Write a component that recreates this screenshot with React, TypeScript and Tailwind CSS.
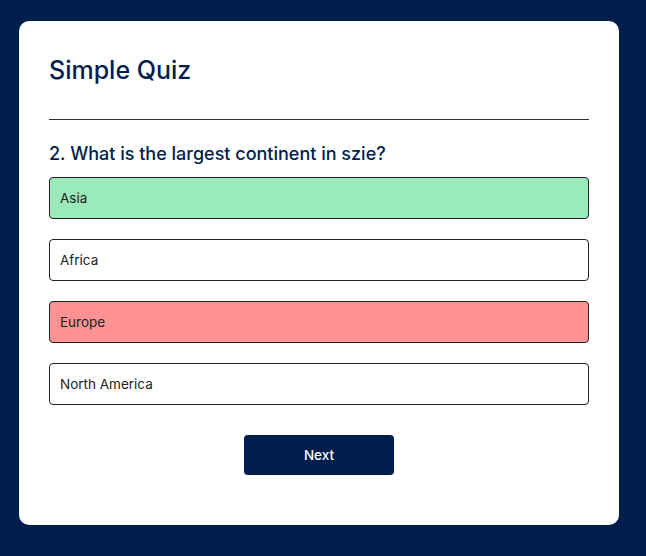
import React from "react";

type Answer = {
    text: string;
    state?: "correct" | "incorrect";
};

const answers: Answer[] = [
    { text: "Asia", state: "correct" },
    { text: "Africa" },
    { text: "Europe", state: "incorrect" },
    { text: "North America" },
];

const App = () => {
    return (
        <div
            className="min-h-screen bg-[#001e4d] pt-[21px] pb-[32px]"
            style={{ fontFamily: 'Inter, "Open Sans", sans-serif' }}
        >
            <div className="ml-[19px] w-[600px] rounded-[10px] bg-white px-[30px] pt-[30px] pb-[50px]">
                <h1 className="border-b border-[#333] pb-[30px] text-[25px] leading-[38px] font-medium text-[#001e4d]">
                    Simple Quiz
                </h1>
                <div className="pt-[20px]">
                    <h2 className="text-[18px] leading-[27px] font-medium text-[#001e4d]">
                        2. What is the largest continent in szie?
                    </h2>
                    <div className="mt-[10px] flex flex-col gap-[20px]">
                        {answers.map((a) => (
                            <button
                                key={a.text}
                                className={
                                    "w-full rounded-[4px] border border-[#222] p-[10px] text-left text-[13.5px] leading-[20px] text-[#222] " +
                                    (a.state === "correct"
                                        ? "bg-[#9aeabc]"
                                        : a.state === "incorrect"
                                        ? "bg-[#ff9393]"
                                        : "bg-white")
                                }
                            >
                                {a.text}
                            </button>
                        ))}
                    </div>
                    <button className="mx-auto mt-[30px] block w-[150px] rounded-[4px] bg-[#001e4d] p-[10px] text-[13.5px] leading-[20px] font-medium text-white">
                        Next
                    </button>
                </div>
            </div>
        </div>
    );
};

export default App;
